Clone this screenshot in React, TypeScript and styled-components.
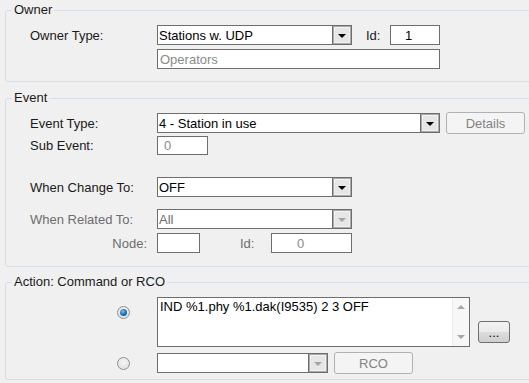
import styled, { createGlobalStyle } from "styled-components";

const GlobalStyle = createGlobalStyle`
  html, body {
    margin: 0;
    padding: 0;
    background: #f0f0f0;
  }
  * {
    box-sizing: border-box;
  }
`;

export default function App() {
  return (
    <>
      <GlobalStyle />
      <Page>
        <Group $top={0}>
          <Legend>Owner</Legend>
          <Body $top={7} $bottom={12}>
            <Row $h={20}>
              <Label>Owner Type:</Label>
              <Combo $w={195}>
                <ComboText>Stations w. UDP</ComboText>
                <ArrowBox>
                  <Arrow />
                </ArrowBox>
              </Combo>
              <SideLabel $left={14} $w={24}>
                Id:
              </SideLabel>
              <Field $w={50} $pad={14}>
                1
              </Field>
            </Row>
            <Row $h={20} $top={4}>
              <Label />
              <Field $w={283} $pad={2} $muted>
                Operators
              </Field>
            </Row>
          </Body>
        </Group>

        <Group $top={8}>
          <Legend>Event</Legend>
          <Body $top={6} $bottom={13}>
            <Row $h={22}>
              <Label>Event Type:</Label>
              <Combo $w={283}>
                <ComboText>4 - Station in use</ComboText>
                <ArrowBox>
                  <Arrow />
                </ArrowBox>
              </Combo>
              <Button $w={79} $left={6} disabled>
                Details
              </Button>
            </Row>
            <Row $h={19} $top={2}>
              <Label>Sub Event:</Label>
              <Field $w={51} $pad={6} $muted>
                0
              </Field>
            </Row>
            <Row $h={20} $top={22}>
              <Label>When Change To:</Label>
              <Combo $w={195}>
                <ComboText>OFF</ComboText>
                <ArrowBox>
                  <Arrow />
                </ArrowBox>
              </Combo>
            </Row>
            <Row $h={20} $top={12}>
              <Label $disabled>When Related To:</Label>
              <Combo $w={195}>
                <ComboText $disabled>All</ComboText>
                <ArrowBox>
                  <Arrow $disabled />
                </ArrowBox>
              </Combo>
            </Row>
            <Row $h={20} $top={4}>
              <Label $disabled $right>
                Node:
              </Label>
              <Field $w={43} />
              <SideLabel $left={40} $w={31} $disabled>
                Id:
              </SideLabel>
              <Field $w={81} $pad={25} $muted>
                0
              </Field>
            </Row>
          </Body>
        </Group>

        <Group $top={7}>
          <Legend>Action: Command or RCO</Legend>
          <Body $top={7} $bottom={5}>
            <Row $h={50}>
              <RadioCell $align="9px">
                <Radio $checked />
              </RadioCell>
              <TextBox>
                <TextContent>IND %1.phy %1.dak(I9535) 2 3 OFF</TextContent>
                <Scrollbar>
                  <ScrollArrow $up />
                  <ScrollArrow />
                </Scrollbar>
              </TextBox>
              <Button $w={32} $left={8} $bottom={4}>
                ...
              </Button>
            </Row>
            <Row $h={22} $top={5}>
              <RadioCell>
                <Radio />
              </RadioCell>
              <Combo $w={171} $h={20}>
                <ComboText />
                <ArrowBox>
                  <Arrow $disabled />
                </ArrowBox>
              </Combo>
              <Button $w={79} $left={6} disabled>
                RCO
              </Button>
            </Row>
          </Body>
        </Group>
      </Page>
    </>
  );
}

const Page = styled.div`
  width: 529px;
  height: 383px;
  overflow: hidden;
  padding-top: 2px;
  font-family: "Liberation Sans", Arial, sans-serif;
  font-size: 13px;
  color: #000;
`;

const Group = styled.fieldset<{ $top: number }>`
  margin: ${(p) => p.$top}px 0 0 5px;
  padding: 0;
  width: 600px;
  min-width: 0;
  border: 1px solid #d5dfe5;
  border-radius: 3px;
`;

const Legend = styled.legend`
  margin-left: 6px;
  padding: 0 2px;
  line-height: 16px;
  color: #1a1a1a;
`;

const Body = styled.div<{ $top: number; $bottom: number }>`
  display: flex;
  flex-direction: column;
  padding: ${(p) => p.$top}px 0 ${(p) => p.$bottom}px 24px;
`;

const Row = styled.div<{ $h: number; $top?: number }>`
  display: flex;
  align-items: center;
  height: ${(p) => p.$h}px;
  margin-top: ${(p) => p.$top ?? 0}px;
`;

const Label = styled.span<{ $disabled?: boolean; $right?: boolean }>`
  flex: none;
  width: 127px;
  padding-right: ${(p) => (p.$right ? "10px" : "0")};
  text-align: ${(p) => (p.$right ? "right" : "left")};
  color: ${(p) => (p.$disabled ? "#6d6d6d" : "#1a1a1a")};
  white-space: nowrap;
`;

const SideLabel = styled.span<{ $left: number; $w: number; $disabled?: boolean }>`
  flex: none;
  margin-left: ${(p) => p.$left}px;
  width: ${(p) => p.$w}px;
  color: ${(p) => (p.$disabled ? "#6d6d6d" : "#1a1a1a")};
`;

const Field = styled.div<{ $w: number; $pad?: number; $muted?: boolean }>`
  flex: none;
  width: ${(p) => p.$w}px;
  height: 100%;
  display: flex;
  align-items: center;
  padding-left: ${(p) => p.$pad ?? 2}px;
  background: #fff;
  border: 1px solid #6e6e6e;
  color: ${(p) => (p.$muted ? "#8a8a8a" : "#000")};
  white-space: nowrap;
`;

const Combo = styled.div<{ $w: number; $h?: number }>`
  flex: none;
  display: flex;
  width: ${(p) => p.$w}px;
  height: ${(p) => (p.$h ? `${p.$h}px` : "20px")};
  background: #fff;
  border: 1px solid #6e6e6e;
`;

const ComboText = styled.span<{ $disabled?: boolean }>`
  flex: 1;
  display: flex;
  align-items: center;
  padding-left: 1px;
  color: ${(p) => (p.$disabled ? "#6d6d6d" : "#000")};
  white-space: nowrap;
  overflow: hidden;
`;

const ArrowBox = styled.span`
  flex: none;
  width: 19px;
  display: flex;
  align-items: center;
  justify-content: center;
  background: #e6e6e6;
  border-left: 1px solid #6e6e6e;
  box-shadow: inset 0 0 0 1px #a9a9a9, inset 0 0 0 2px #f2f2f2;
`;

const Arrow = styled.span<{ $disabled?: boolean }>`
  width: 0;
  height: 0;
  margin-top: 1px;
  border-left: 4px solid transparent;
  border-right: 4px solid transparent;
  border-top: 4px solid ${(p) => (p.$disabled ? "#a3a3a3" : "#000")};
`;

const Button = styled.button<{ $w: number; $left?: number; $bottom?: number }>`
  flex: none;
  align-self: ${(p) => (p.$bottom !== undefined ? "flex-end" : "center")};
  width: ${(p) => p.$w}px;
  height: 22px;
  margin: 0 0 ${(p) => p.$bottom ?? 0}px ${(p) => p.$left ?? 0}px;
  padding: 0;
  font-family: inherit;
  font-size: 13px;
  color: #000;
  border: 1px solid #707070;
  border-radius: 3px;
  background: linear-gradient(#f2f2f2 0%, #ebebeb 50%, #dddddd 51%, #cfcfcf 100%);

  &:disabled {
    color: #838383;
    border-color: #adb2b5;
    background: #f4f4f4;
  }
`;

const RadioCell = styled.span<{ $align?: string }>`
  flex: none;
  width: 127px;
  align-self: ${(p) => (p.$align ? "flex-start" : "center")};
  margin-top: ${(p) => p.$align ?? "0"};
  padding-left: 87px;
  display: flex;
`;

const Radio = styled.span<{ $checked?: boolean }>`
  width: 13px;
  height: 13px;
  border-radius: 50%;
  border: 1px solid #8e8f8f;
  background: radial-gradient(circle at 50% 40%, #f6f6f6 0%, #dcdcdc 100%);
  display: flex;
  align-items: center;
  justify-content: center;

  &::after {
    content: "";
    width: 7px;
    height: 7px;
    border-radius: 50%;
    display: ${(p) => (p.$checked ? "block" : "none")};
    background: radial-gradient(circle at 40% 35%, #6cc3f2 0%, #1d6db5 55%, #0c3f78 100%);
  }
`;

const TextBox = styled.div`
  flex: none;
  display: flex;
  width: 313px;
  height: 100%;
  background: #fff;
  border: 1px solid #6e6e6e;
`;

const TextContent = styled.div`
  flex: 1;
  padding: 1px 2px;
  line-height: 15px;
  white-space: nowrap;
`;

const Scrollbar = styled.div`
  flex: none;
  width: 17px;
  display: flex;
  flex-direction: column;
  justify-content: space-between;
  align-items: center;
  padding: 7px 0;
  background: #f7f7f7;
  border-left: 1px solid #ececec;
`;

const ScrollArrow = styled.span<{ $up?: boolean }>`
  width: 0;
  height: 0;
  border-left: 4px solid transparent;
  border-right: 4px solid transparent;
  ${(p) =>
    p.$up ? "border-bottom: 4px solid #a8a8a8;" : "border-top: 4px solid #a8a8a8;"}
`;
